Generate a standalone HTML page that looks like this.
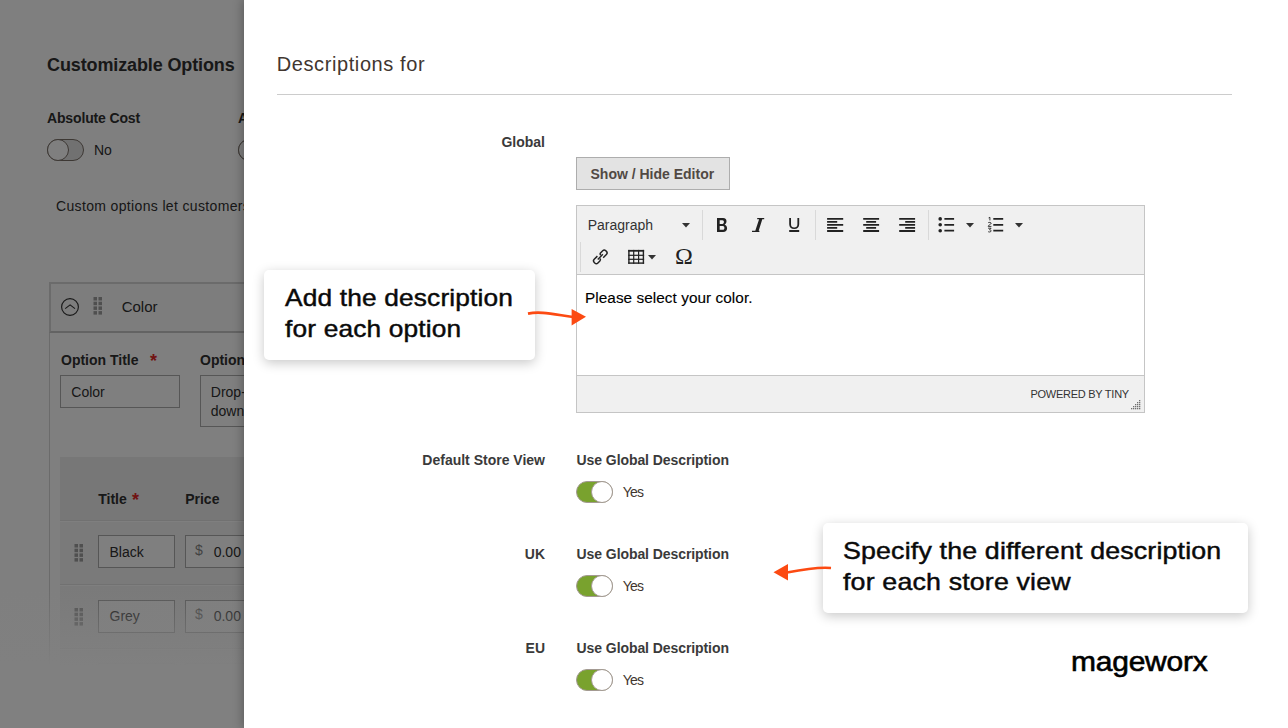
<!DOCTYPE html>
<html><head><meta charset="utf-8">
<style>
*{box-sizing:border-box;margin:0;padding:0}
html,body{width:1288px;height:728px;overflow:hidden;background:#fff}
body{position:relative;font-family:"Liberation Sans",sans-serif;color:#303030}
.a{position:absolute;white-space:nowrap}
.t14{font-size:14px;line-height:14px}
.b{font-weight:bold}
#page{position:absolute;left:0;top:0;width:1288px;height:728px;background:#fff}
#ov{position:absolute;left:0;top:0;width:1288px;height:728px;background:rgba(0,0,0,.5)}
#fade{position:absolute;left:0;top:588px;width:244px;height:140px;background:linear-gradient(to bottom,rgba(128,128,128,0) 0px,rgba(128,128,128,1) 78px)}
#modal{position:absolute;left:244px;top:0;width:1044px;height:728px;background:#fff;box-shadow:0 0 10px 1px rgba(0,0,0,.3)}
.tog{position:absolute;width:37px;height:22px;border-radius:11px;border:1px solid #7a7068;background:#e3e3e3}
.tog i{position:absolute;top:-1px;left:-1px;width:22px;height:22px;border-radius:50%;background:#fff;border:1px solid #7a7068}
.tog.on{background:#79a22e;border-color:#a39a92}
.tog.on i{left:14px;border-color:#a39a92}
.inp{position:absolute;border:1px solid #adadad;background:#fff}
.lab{color:#3a3a3a;font-weight:bold}
.sep{position:absolute;width:1px;background:#d9d9d9}
.callout{position:absolute;background:#fff;border-radius:5px;box-shadow:0 3px 12px rgba(0,0,0,.22);color:#0a0a0a;font-size:24px;line-height:31px}
</style></head><body>
<div id="page">
  <div class="a b" style="left:47px;top:55.5px;font-size:18px;line-height:18px;letter-spacing:-0.12px">Customizable Options</div>
  <div class="a t14 b" style="left:47px;top:111px;letter-spacing:-0.15px">Absolute Cost</div>
  <div class="tog" style="left:47px;top:139px"><i></i></div>
  <div class="a t14" style="left:94px;top:143px">No</div>
  <div class="a t14 b" style="left:238px;top:111px">Absolute Weight</div>
  <div class="tog" style="left:238px;top:139px"><i></i></div>
  <div class="a t14" style="left:56px;top:199.4px;letter-spacing:0.35px">Custom options let customers choose the product variations they want.</div>

  <div style="position:absolute;left:49px;top:333px;width:1px;height:340px;background:#d6d6d6"></div>
  <div style="position:absolute;left:49px;top:282px;width:400px;height:51px;background:#fafafa;border:2px solid #d6d6d6;border-bottom-color:#c6c6c6"></div>
  <svg style="position:absolute;left:60px;top:297px" width="20" height="20" viewBox="0 0 20 20"><circle cx="10" cy="10" r="8.4" fill="none" stroke="#303030" stroke-width="1.15"/><path d="M5.2 11.6 L10.1 7.9 L15 11.6" fill="none" stroke="#303030" stroke-width="1.1"/></svg>
  <svg style="position:absolute;left:93px;top:297px" width="10" height="18"><g fill="#9e9e9e"><rect x="0.5" y="0" width="3.5" height="3.5"/><rect x="5.5" y="0" width="3.5" height="3.5"/><rect x="0.5" y="4.7" width="3.5" height="3.5"/><rect x="5.5" y="4.7" width="3.5" height="3.5"/><rect x="0.5" y="9.4" width="3.5" height="3.5"/><rect x="5.5" y="9.4" width="3.5" height="3.5"/><rect x="0.5" y="14.1" width="3.5" height="3.5"/><rect x="5.5" y="14.1" width="3.5" height="3.5"/></g></svg>
  <div class="a t14" style="left:121.7px;top:300px;font-size:15px">Color</div>

  <div class="a t14 b" style="left:61px;top:353.2px">Option Title</div>
  <div class="a b" style="left:150px;top:352px;color:#e22626;font-size:18px;line-height:18px">*</div>
  <div class="a t14 b" style="left:200px;top:353.2px">Option Type</div>
  <div class="inp" style="left:60px;top:375px;width:120px;height:33px"></div>
  <div class="a t14" style="left:71.3px;top:385px">Color</div>
  <div class="inp" style="left:200px;top:375px;width:120px;height:52px"></div>
  <div class="a t14" style="left:210.8px;top:385px">Drop-</div>
  <div class="a t14" style="left:210.8px;top:404px">down</div>

  <div style="position:absolute;left:60px;top:457px;width:300px;height:64px;background:#efefef;border-bottom:1px solid #e3e3e3"></div>
  <div class="a t14 b" style="left:98.2px;top:492px">Title</div>
  <div class="a b" style="left:132px;top:491px;color:#e22626;font-size:18px;line-height:18px">*</div>
  <div class="a t14 b" style="left:185.2px;top:492px">Price</div>

  <div style="position:absolute;left:60px;top:522px;width:300px;height:63px;background:#f5f5f5;border-bottom:1px solid #e3e3e3"></div>
  <svg style="position:absolute;left:74px;top:544px" width="10" height="18"><g fill="#9e9e9e"><rect x="0.5" y="0" width="3.5" height="3.5"/><rect x="5.5" y="0" width="3.5" height="3.5"/><rect x="0.5" y="4.7" width="3.5" height="3.5"/><rect x="5.5" y="4.7" width="3.5" height="3.5"/><rect x="0.5" y="9.4" width="3.5" height="3.5"/><rect x="5.5" y="9.4" width="3.5" height="3.5"/><rect x="0.5" y="14.1" width="3.5" height="3.5"/><rect x="5.5" y="14.1" width="3.5" height="3.5"/></g></svg>
  <div class="inp" style="left:98px;top:535px;width:77px;height:33px"></div>
  <div class="a t14" style="left:109.5px;top:545px">Black</div>
  <div class="inp" style="left:185px;top:535px;width:90px;height:33px"></div>
  <div class="a t14" style="left:195px;top:543px;color:#858585">$</div>
  <div class="a t14" style="left:213.7px;top:545px">0.00</div>

  <div style="position:absolute;left:60px;top:586px;width:300px;height:63px;background:#f5f5f5;border-bottom:1px solid #e3e3e3"></div>
  <svg style="position:absolute;left:74px;top:608px" width="10" height="18"><g fill="#9e9e9e"><rect x="0.5" y="0" width="3.5" height="3.5"/><rect x="5.5" y="0" width="3.5" height="3.5"/><rect x="0.5" y="4.7" width="3.5" height="3.5"/><rect x="5.5" y="4.7" width="3.5" height="3.5"/><rect x="0.5" y="9.4" width="3.5" height="3.5"/><rect x="5.5" y="9.4" width="3.5" height="3.5"/><rect x="0.5" y="14.1" width="3.5" height="3.5"/><rect x="5.5" y="14.1" width="3.5" height="3.5"/></g></svg>
  <div class="inp" style="left:98px;top:599.5px;width:77px;height:33px"></div>
  <div class="a t14" style="left:109.5px;top:609px">Grey</div>
  <div class="inp" style="left:185px;top:599.5px;width:90px;height:33px"></div>
  <div class="a t14" style="left:195px;top:607px;color:#858585">$</div>
  <div class="a t14" style="left:213.7px;top:609px">0.00</div>
  <div style="position:absolute;left:60px;top:650px;width:300px;height:63px;background:#f5f5f5;border-bottom:1px solid #e3e3e3"></div>
  <div class="inp" style="left:98px;top:663px;width:77px;height:33px"></div>
  <div class="inp" style="left:185px;top:663px;width:90px;height:33px"></div>
</div>
<div id="ov"></div>
<div id="fade"></div>

<div id="modal"></div>
<div id="mc" style="position:absolute;left:0;top:0;width:1288px;height:728px">
  <div class="a" style="left:276.7px;top:54.2px;font-size:20px;line-height:20px;color:#41362f;letter-spacing:0.6px">Descriptions for</div>
  <div style="position:absolute;left:277px;top:94px;width:955px;height:1px;background:#cccccc"></div>

  <div class="a t14 lab" style="right:743px;top:135px">Global</div>
  <div style="position:absolute;left:576px;top:157px;width:154px;height:33px;background:#e3e3e3;border:1px solid #adadad"></div>
  <div class="a t14 b" style="left:590.5px;top:167.2px;color:#514943">Show / Hide Editor</div>

  <div id="ed" style="position:absolute;left:576px;top:205px;width:569px;height:208px;border:1px solid #c5c5c5;background:#fff">
    <div style="position:absolute;left:0;top:0;width:567px;height:69px;background:#f0f0f0;border-bottom:1px solid #c5c5c5"></div>
    <div style="position:absolute;left:0;top:169px;width:567px;height:37px;background:#f0f0f0;border-top:1px solid #c5c5c5"></div>
  </div>
  <div class="a t14" style="left:587.7px;top:218.1px;color:#333">Paragraph</div>
  <svg class="a" style="left:0;top:0" width="1288" height="728">
    <g fill="#333">
      <path d="M682 223 L690 223 L686 227.5 Z" fill="#333"/>
      <path d="M966 223 L974 223 L970 227.5 Z"/>
      <path d="M1015 223 L1023 223 L1019 227.5 Z"/>
      <path d="M648 255 L656 255 L652 259.5 Z"/>
    </g>
    <g fill="#222">
      <path fill-rule="evenodd" d="M717 218 H723 C725.6 218 726.5 219.6 726.5 221.2 C726.5 222.7 725.8 223.9 724.6 224.7 C726.3 225.2 727.1 226.6 727.1 228.3 C727.1 230.4 725.6 232 723.1 232 H717 Z M719.7 220.2 V223.9 H722.4 C723.4 223.9 723.9 223.1 723.9 222 C723.9 220.9 723.4 220.2 722.4 220.2 Z M719.7 226.1 V229.8 H722.8 C723.9 229.8 724.4 229 724.4 227.9 C724.4 226.8 723.9 226.1 722.8 226.1 Z"/>
      <path d="M757.2 218 H764.2 V219.2 H762.3 L758.7 230.8 H759.4 V232 H752 V230.8 H755.3 L759.1 219.2 H757.2 Z"/>
      <path d="M789.2 218 H791 V224.2 C791 226.3 792.2 227.4 794.2 227.4 C796.2 227.4 797.4 226.3 797.4 224.2 V218 H799.2 V224.2 C799.2 227.3 797.3 228.9 794.2 228.9 C791.1 228.9 789.2 227.3 789.2 224.2 Z M789.2 230.1 H799.2 V231.9 H789.2 Z"/>
      <path d="M827.1 218 H843.2 V219.8 H827.1 Z M827.1 221.1 H837.2 V222.8 H827.1 Z M827.1 224 H843.2 V225.8 H827.1 Z M827.1 227.1 H837.2 V228.8 H827.1 Z M827.1 230.1 H843.2 V231.9 H827.1 Z"/>
      <path d="M863.2 218 H879.1 V219.8 H863.2 Z M866.2 221.1 H876.1 V222.8 H866.2 Z M863.2 224 H879.1 V225.8 H863.2 Z M866.2 227.1 H876.1 V228.8 H866.2 Z M863.2 230.1 H879.1 V231.9 H863.2 Z"/>
      <path d="M899.2 218 H915.1 V219.8 H899.2 Z M905.2 221.1 H915.1 V222.8 H905.2 Z M899.2 224 H915.1 V225.8 H899.2 Z M905.2 227.1 H915.1 V228.8 H905.2 Z M899.2 230.1 H915.1 V231.9 H899.2 Z"/>
      <circle cx="940.2" cy="218.9" r="1.8"/><circle cx="940.2" cy="224.8" r="1.8"/><circle cx="940.2" cy="230.7" r="1.8"/>
      <path d="M944.4 218 H954.1 V219.8 H944.4 Z M944.4 223.9 H954.1 V225.7 H944.4 Z M944.4 229.8 H954.1 V231.6 H944.4 Z"/>
      <path d="M993.3 218 H1003.2 V219.8 H993.3 Z M993.3 223.9 H1003.2 V225.7 H993.3 Z M993.3 229.8 H1003.2 V231.6 H993.3 Z"/>
    </g>
    <g fill="none" stroke="#222" stroke-width="0.9">
      <path d="M988.6 217.9 L989.9 217.3 V220.4"/>
      <path d="M988.1 222.8 C988.5 222.2 991.2 222.2 991.2 223.3 C991.2 224.3 988.2 225 988.2 226.4 H991.4"/>
      <path d="M988.1 228.2 H991.1 L989.5 229.8 C991.6 229.8 991.6 232 989.6 232 C988.9 232 988.4 231.8 988.1 231.5"/>
    </g>
    <g fill="none" stroke="#222" stroke-width="1.45" transform="translate(600.3 256.9) rotate(-45)">
      <path d="M -1.5 -2.6 H -6 A 2.2 2.2 0 0 0 -8.2 -0.4 V 0.4 A 2.2 2.2 0 0 0 -6 2.6 H -3.2 A 1.7 1.7 0 0 0 -1.5 0.9"/>
      <path d="M 1.5 2.6 H 6 A 2.2 2.2 0 0 0 8.2 0.4 V -0.4 A 2.2 2.2 0 0 0 6 -2.6 H 3.2 A 1.7 1.7 0 0 0 1.5 -0.9"/>
      <path d="M -3.6 0 L 3.6 0"/>
    </g>
    <g fill="#222">
      <rect x="628.2" y="249.9" width="15.9" height="1.8"/>
      <rect x="628.2" y="249.9" width="1.4" height="13.9"/>
      <rect x="642.7" y="249.9" width="1.4" height="13.9"/>
      <rect x="628.2" y="262.4" width="15.9" height="1.4"/>
      <rect x="628.2" y="254.7" width="15.9" height="1.2"/>
      <rect x="628.2" y="258.7" width="15.9" height="1.2"/>
      <rect x="633.1" y="249.9" width="1.2" height="13.9"/>
      <rect x="638" y="249.9" width="1.2" height="13.9"/>
    </g>
    <g fill="#707070">
      <rect x="1139" y="400" width="1.3" height="1.3"/>
      <rect x="1137" y="402" width="1.3" height="1.3"/><rect x="1139" y="402" width="1.3" height="1.3"/>
      <rect x="1135" y="404" width="1.3" height="1.3"/><rect x="1137" y="404" width="1.3" height="1.3"/><rect x="1139" y="404" width="1.3" height="1.3"/>
      <rect x="1133" y="406" width="1.3" height="1.3"/><rect x="1135" y="406" width="1.3" height="1.3"/><rect x="1137" y="406" width="1.3" height="1.3"/><rect x="1139" y="406" width="1.3" height="1.3"/>
      <rect x="1131" y="408" width="1.3" height="1.3"/><rect x="1133" y="408" width="1.3" height="1.3"/><rect x="1135" y="408" width="1.3" height="1.3"/><rect x="1137" y="408" width="1.3" height="1.3"/><rect x="1139" y="408" width="1.3" height="1.3"/>
    </g>
    <g fill="#d9d9d9">
      <rect x="702" y="210" width="1" height="30"/>
      <rect x="815" y="210" width="1" height="30"/>
      <rect x="928" y="210" width="1" height="30"/>
      <rect x="580" y="242" width="1" height="30"/>
    </g>
  </svg>
  <div class="a" style="left:675px;top:243px;font-family:'Liberation Serif',serif;font-size:24px;line-height:26px;color:#222">&#937;</div>
  <div class="a t14" style="left:584.6px;top:290.7px;color:#000;letter-spacing:0.05px;-webkit-text-stroke:0.12px #000;transform:scaleX(1.095);transform-origin:0 0">Please select your color.</div>
  <div class="a" style="left:1030.4px;top:388.5px;font-size:11px;line-height:11px;color:#333;letter-spacing:-0.25px">POWERED BY TINY</div>

  <div class="a t14 lab" style="right:743px;top:453px">Default Store View</div>
  <div class="a t14 lab" style="left:576.6px;top:453px;letter-spacing:-0.08px">Use Global Description</div>
  <div class="tog on" style="left:576px;top:481px"><i></i></div>
  <div class="a t14" style="left:622.8px;top:485px;color:#41362f;letter-spacing:-0.8px">Yes</div>

  <div class="a t14 lab" style="right:743px;top:547px">UK</div>
  <div class="a t14 lab" style="left:576.6px;top:547px;letter-spacing:-0.08px">Use Global Description</div>
  <div class="tog on" style="left:576px;top:575px"><i></i></div>
  <div class="a t14" style="left:622.8px;top:579px;color:#41362f;letter-spacing:-0.8px">Yes</div>

  <div class="a t14 lab" style="right:743px;top:641px">EU</div>
  <div class="a t14 lab" style="left:576.6px;top:641px;letter-spacing:-0.08px">Use Global Description</div>
  <div class="tog on" style="left:576px;top:669px"><i></i></div>
  <div class="a t14" style="left:622.8px;top:673px;color:#41362f;letter-spacing:-0.8px">Yes</div>

  <div class="callout" style="left:264px;top:270px;width:271px;height:90px"></div>
  <div class="a" style="left:285.2px;top:281.8px;font-size:24px;line-height:31px;color:#0a0a0a;letter-spacing:0.15px;-webkit-text-stroke:0.45px #0a0a0a;transform:scaleX(1.095);transform-origin:0 0">Add the description<br>for each option</div>
  <div class="callout" style="left:823px;top:523px;width:425px;height:90px"></div>
  <div class="a" style="left:843px;top:535.3px;font-size:24px;line-height:31px;color:#0a0a0a;letter-spacing:0.15px;-webkit-text-stroke:0.45px #0a0a0a;transform:scaleX(1.115);transform-origin:0 0">Specify the different description<br>for each store view</div>

  <svg class="a" style="left:0;top:0" width="1288" height="728">
    <path d="M528 313.6 C540 311, 552 314, 573 317" fill="none" stroke="#fc4a12" stroke-width="2.7"/>
    <path d="M571.6 309 L586 316.8 L571.6 325.5 Z" fill="#fc4a12"/>
    <path d="M831 568 C820 567, 805 569, 787 572.5" fill="none" stroke="#fc4a12" stroke-width="2.7"/>
    <path d="M788 564 L773.5 572.3 L788 580.6 Z" fill="#fc4a12"/>
  </svg>

  <div class="a" style="left:1071.3px;top:648px;font-size:28px;line-height:28px;color:#000;letter-spacing:-0.2px;-webkit-text-stroke:0.6px #000;transform:scaleX(1.07);transform-origin:0 0">mageworx</div>
</div>
</body></html>
